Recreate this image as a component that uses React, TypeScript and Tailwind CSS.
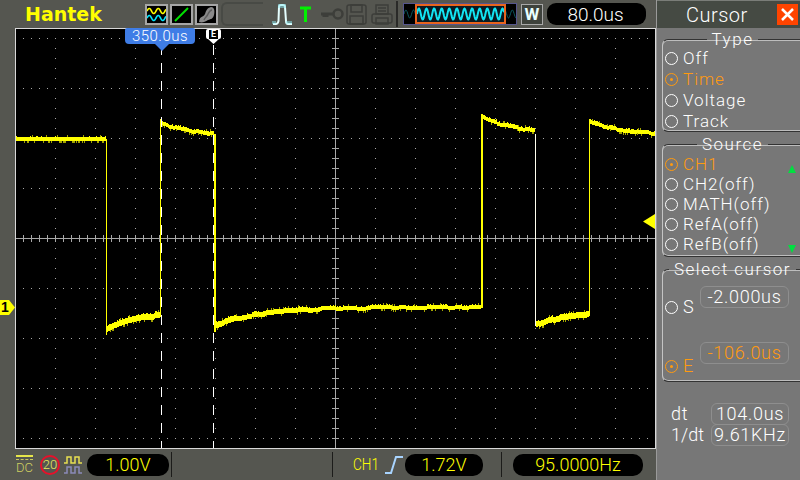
import React from "react";

const FONT = { fontFamily: 'Roboto, "Liberation Sans", Arial, sans-serif', fontWeight: 300 };

function rnd(i: number) {
  const s = Math.sin(i * 12.9898) * 43758.5453;
  return s - Math.floor(s);
}

type Seg = { x0: number; x1: number; y0: number; yi: number; tau: number; th0: number; th1: number };
const SEGS: Seg[] = [
  { x0: 16, x1: 106, y0: 139, yi: 139, tau: 40, th0: 4, th1: 4 },
  { x0: 107, x1: 160, y0: 329, yi: 312, tau: 30, th0: 6, th1: 6 },
  { x0: 161, x1: 214, y0: 123, yi: 137, tau: 40, th0: 4, th1: 4 },
  { x0: 215, x1: 481, y0: 325, yi: 307, tau: 42, th0: 6, th1: 4 },
  { x0: 482, x1: 535, y0: 117, yi: 135, tau: 40, th0: 4, th1: 4 },
  { x0: 536, x1: 589, y0: 324, yi: 312, tau: 32, th0: 6, th1: 6 },
  { x0: 590, x1: 655, y0: 122, yi: 136, tau: 42, th0: 4, th1: 4 },
];

function buildTrace() {
  let bright = "";
  let dim = "";
  SEGS.forEach((s, i) => {
    for (let x = s.x0; x < s.x1; x++) {
      const jog = i > 0 && rnd(Math.floor(x / 7) + 500) > 0.6 ? 1 : 0;
      const y = Math.round(s.yi + (s.y0 - s.yi) * Math.exp(-(x - s.x0) / s.tau)) + jog;
      const th = Math.round(s.th1 + (s.th0 - s.th1) * Math.exp(-(x - s.x0) / 70));
      const t = y - Math.floor(th / 2);
      const r = rnd(x);
      bright += `M${x} ${t}h1v${th}h-1z`;
      if (r > 0.82) bright += `M${x} ${t - 1}h1v1h-1z`;
      else if (r < 0.22) dim += `M${x} ${t + th}h1v2h-1z`;
      else if (r < 0.3) dim += `M${x} ${t - 2}h1v2h-1z`;
    }
  });
  return { bright, dim };
}

function Grid() {
  const rows = [38, 88, 138, 188, 288, 338, 388, 438];
  const cols: number[] = [];
  for (let x = 55; x < 655; x += 40) if (x !== 335) cols.push(x);
  let dots = "";
  rows.forEach((y) => {
    for (let x = 23; x < 655; x += 8) dots += `M${x} ${y}h1v1h-1z`;
  });
  cols.forEach((x) => {
    for (let y = 38; y < 448; y += 10) dots += `M${x} ${y}h1v1h-1z`;
  });
  let ticks = "";
  for (let x = 23; x < 655; x += 8) ticks += `M${x} 235h1v7h-1z`;
  for (let y = 38; y < 448; y += 10) ticks += `M332 ${y}h7v1h-7z`;
  const { bright, dim } = buildTrace();
  return (
    <svg
      className="absolute inset-0"
      width={639}
      height={419}
      viewBox="16 29 639 419"
      shapeRendering="crispEdges"
    >
      <path d={dots} fill="#a8a8a8" />
      <rect x={16} y={238} width={639} height={1} fill="#a8a8a8" />
      <rect x={335} y={29} width={1} height={419} fill="#a8a8a8" />
      <path d={ticks} fill="#a8a8a8" />
      <path d={dim} fill="#a3a300" />
      <path d={bright} fill="#ffff00" />
      <rect x={106} y={139} width={1} height={196} fill="#ffff00" />
      <rect x={160} y={119} width={1} height={198} fill="#ffff00" />
      <rect x={214} y={134} width={2} height={198} fill="#ffff00" />
      <rect x={481} y={114} width={2} height={194} fill="#ffff00" />
      <rect x={535} y={134} width={1} height={192} fill="#fffff0" />
      <rect x={589} y={119} width={1} height={197} fill="#ffff00" />
      <line x1={161.5} y1={45} x2={161.5} y2={448} stroke="#ffffff" strokeWidth={1} strokeDasharray="10 8" />
      <line x1={213.5} y1={45} x2={213.5} y2={448} stroke="#ffffff" strokeWidth={1} strokeDasharray="10 8" />
      <path d="M655 214v15l-12-7.5z" fill="#ffff00" shapeRendering="auto" />
    </svg>
  );
}

function Sine({ x0, x1, cy, amp, period, color, w }: { x0: number; x1: number; cy: number; amp: number; period: number; color: string; w: number }) {
  const pts: string[] = [];
  for (let x = x0; x <= x1; x += 0.5) {
    pts.push(`${x},${(cy - amp * Math.sin(((x - x0) / period) * Math.PI * 2)).toFixed(2)}`);
  }
  return <polyline points={pts.join(" ")} fill="none" stroke={color} strokeWidth={w} />;
}

function IconBox({ children, className }: { children: React.ReactNode; className?: string }) {
  return (
    <div className={`w-[23px] h-[21px] border-2 border-[#a6a6a6] bg-black shrink-0 ${className ?? ""}`}>
      <svg width={19} height={17} viewBox="0 0 19 17">
        {children}
      </svg>
    </div>
  );
}

function TopBar() {
  return (
    <div className="h-[28px] flex items-center bg-[#555650] pl-[25px]" style={FONT}>
      <span
        className="w-[76px] text-[19px] font-bold leading-none text-[#ffff00] shrink-0"
        style={{ fontFamily: '"DejaVu Sans", sans-serif' }}
      >
        Hantek
      </span>
      <IconBox className="ml-[44px]">
        <Sine x0={0} x1={19} cy={5} amp={2.6} period={9} color="#ffff00" w={1.6} />
        <Sine x0={0} x1={19} cy={12} amp={2.6} period={9} color="#00e5ff" w={1.6} />
      </IconBox>
      <IconBox className="ml-[2px]">
        <line x1={3} y1={15} x2={16} y2={2} stroke="#00e000" strokeWidth={2} />
      </IconBox>
      <IconBox className="ml-[2px]">
        <path d="M2 16C3 9 6 12 8 8c1-3 2-6 6-7 3 0 4 3 3 8-1 4-3 4-6 5-3 2-6 3-9 2z" fill="#8a8a8a" />
        <path d="M7 14c1-3 3-3 4-6 1-2 2-4 4-4" fill="none" stroke="#5e5e5e" strokeWidth={1.5} />
      </IconBox>
      <div className="ml-[3px] w-[42px] h-[24px] border-l-2 border-t-2 border-b-2 border-[#484a45] rounded-l-[6px] shrink-0" />
      <svg className="ml-[9px] shrink-0" width={21} height={22} viewBox="0 0 21 22" fill="none">
        <path d="M1 21h3c1 0 2-1 2.500-3L7 4c0-1 1-2 2-2h2c1 0 2 1 2 2l1 14c0 2 1 3 2 3h4" stroke="#e6ffff" strokeWidth={2} />
        <path d="M7 1v4M9 1v4M11 1v4M13 1v4M1 18v3M3 18v3M15 18v3M17 18v3M19 18v3" stroke="#8fe8ef" strokeWidth={1} />
      </svg>
      <svg className="ml-[6px] shrink-0" width={13} height={18} viewBox="0 0 13 18">
        <path d="M1 3h11M6.500 3v14" stroke="#00f000" strokeWidth={3} fill="none" />
      </svg>
      <svg className="ml-[8px] shrink-0" width={24} height={14} viewBox="0 0 24 14" fill="none">
        <circle cx={18} cy={7} r={4.500} stroke="#3d3e3a" strokeWidth={2.500} />
        <path d="M13 7H1M4 7v3M7 7v3" stroke="#3d3e3a" strokeWidth={3} />
      </svg>
      <svg className="ml-[2px] shrink-0" width={21} height={21} viewBox="0 0 21 21" fill="none" stroke="#3d3e3a" strokeWidth={1.500}>
        <rect x={1} y={1} width={19} height={19} rx={2} />
        <rect x={5} y={1} width={11} height={7} />
        <rect x={4} y={12} width={13} height={8} />
      </svg>
      <svg className="ml-[4px] shrink-0" width={22} height={21} viewBox="0 0 22 21" fill="none" stroke="#3d3e3a" strokeWidth={1.500}>
        <rect x={5} y={1} width={12} height={9} />
        <path d="M7 4h8M7 7h8" />
        <rect x={1} y={10} width={20} height={9} rx={2} />
        <rect x={5} y={14} width={12} height={6} />
      </svg>
      <div className="ml-[3px] w-[2px] h-[26px] bg-[#2a2a28] shrink-0" />
      <div className="ml-[5px] w-[114px] h-[22px] border border-[#55558c] bg-black shrink-0 relative">
        <svg className="absolute inset-0" width={112} height={20} viewBox="0 0 112 20">
          <Sine x0={0} x1={112} cy={10} amp={4} period={7.600} color="#0c5a60" w={1} />
        </svg>
        <div className="absolute left-[11px] top-0 w-[91px] h-[20px] border-2 border-[#e8641e] bg-[#0a1a22]">
          <svg width={87} height={16} viewBox="0 0 87 16">
            <Sine x0={0} x1={87} cy={8} amp={5.500} period={7.600} color="#12e4f2" w={2} />
          </svg>
        </div>
      </div>
      <div
        className="ml-[4px] w-[22px] h-[21px] border border-[#a8a8a8] bg-[#3e423c] flex items-center justify-center text-[17px] leading-none font-bold text-[#e8ffff] shrink-0"
      >
        W
      </div>
      <div className="ml-[4px] w-[99px] h-[22px] rounded-[9px] bg-black flex items-center justify-center text-[19px] leading-none text-white shrink-0 pr-[2px]">
        80.0us
      </div>
    </div>
  );
}

function BottomBar() {
  const Pill = ({ w, text, className }: { w: string; text: string; className: string }) => (
    <div className={`${w} ${className} h-[22px] rounded-[10px] bg-black flex items-center justify-center text-[18px] leading-none text-[#ffff00] shrink-0`}>
      {text}
    </div>
  );
  return (
    <div className="h-[31px] flex items-center bg-[#555650] pl-[16px]" style={FONT}>
      <div className="w-[17px] h-[21px] flex flex-col items-center shrink-0">
        <div className="w-[17px] h-[2px] bg-[#e6e64a] mt-[1px]" />
        <div className="w-[17px] h-0 border-t border-dashed border-[#c8c860] mt-[2px]" />
        <span className="text-[13px] leading-[13px] mt-[1px] text-[#cfcf60]">DC</span>
      </div>
      <div className="ml-[7px] w-[20px] h-[20px] rounded-full border-2 border-[#e8102a] flex items-center justify-center text-[13px] leading-none text-[#e8e860] shrink-0">
        20
      </div>
      <svg className="ml-[4px] shrink-0" width={18} height={20} viewBox="0 0 18 20" fill="none" strokeWidth={1.500}>
        <path d="M0 8h3V2h4v6h4V2h4v6h3" stroke="#e8e050" />
        <path d="M0 18h3v-6h4v6h4v-6h4v6h3" stroke="#8a8ab8" />
      </svg>
      <Pill w="w-[82px]" text="1.00V" className="ml-[5px]" />
      <div className="ml-[2px] w-px h-[25px] bg-[#1c1c1a] shrink-0" />
      <div className="ml-[160px] w-px h-[25px] bg-[#1c1c1a] shrink-0" />
      <span className="ml-[20px] w-[27px] text-[17px] leading-none text-[#ffff00] shrink-0 scale-x-[0.8] origin-left whitespace-nowrap">CH1</span>
      <svg className="ml-[5px] shrink-0" width={18} height={20} viewBox="0 0 18 20" fill="none">
        <path d="M0 18h6L11 2h7" stroke="#a8d4ff" strokeWidth={2} />
      </svg>
      <Pill w="w-[78px]" text="1.72V" className="ml-[2px]" />
      <div className="ml-[18px] w-px h-[25px] bg-[#1c1c1a] shrink-0" />
      <Pill w="w-[130px]" text="95.0000Hz" className="ml-[11px]" />
    </div>
  );
}

function Plot() {
  return (
    <div className="flex h-[421px] bg-[#555650]">
      <div className="w-[15px] relative shrink-0">
        <div
          className="absolute left-0 top-[272px] w-[15px] h-[15px] bg-[#ffff00] text-black text-[14px] font-bold leading-[15px] pl-[1px]"
          style={{ clipPath: "polygon(0 0, 60% 0, 100% 50%, 60% 100%, 0 100%)", fontFamily: '"Liberation Sans", sans-serif' }}
        >
          1
        </div>
      </div>
      <div className="relative w-[641px] border border-[#d8d8d8] bg-black shrink-0" style={FONT}>
        <Grid />
        <div className="absolute left-[109px] -top-px w-[70px] h-[16px] rounded-b-[4px] rounded-t-[2px] bg-[#3f7de6] text-white text-[15px] tracking-[0.5px] leading-[16px] text-center">
          350.0us
        </div>
        <svg className="absolute left-[139px] top-[15px]" width={14} height={7} viewBox="0 0 14 7">
          <path d="M0 0h14L7 7z" fill="#3f7de6" />
        </svg>
        <div className="absolute left-[190px] top-0 w-[15px] h-[10px] rounded-[2px] bg-white flex items-center justify-center">
          <div className="w-[9px] h-[9px] bg-black text-white text-[9px] font-bold leading-[9px] text-center">E</div>
        </div>
        <svg className="absolute left-[192px] top-[10px]" width={11} height={5} viewBox="0 0 11 5">
          <path d="M0 0h11L5.500 5z" fill="#ffffff" />
        </svg>
      </div>
    </div>
  );
}

function Radio({ on }: { on?: boolean }) {
  return (
    <span
      className={`w-[13px] h-[13px] rounded-full border flex items-center justify-center shrink-0 ${
        on ? "border-[#ff9a10]" : "border-white"
      }`}
    >
      {on && <span className="w-[3px] h-[3px] rounded-full bg-[#ff9a10]" />}
    </span>
  );
}

function Option({ label, on, h }: { label: string; on?: boolean; h: string }) {
  return (
    <div className={`${h} flex items-center ${on ? "text-[#ff9a10]" : "text-white"}`}>
      <Radio on={on} />
      <span className="ml-[5px] text-[17px] tracking-[1px] leading-none whitespace-nowrap">{label}</span>
    </div>
  );
}

function Group({ title, height, children }: { title: string; height: string; children: React.ReactNode }) {
  return (
    <fieldset
      className={`${height} border-l border-t border-b border-l-[#c4c4c4] border-t-[#333333] border-b-[#333333] rounded-l-[6px] shadow-[inset_0_1px_0_#bdbdbd,inset_0_-1px_0_#bdbdbd] pl-[2px]`}
    >
      <legend className="mx-auto px-[5px] h-[18px] text-white text-[17px] tracking-[1.5px] leading-[18px] whitespace-nowrap">
        {title}
      </legend>
      {children}
    </fieldset>
  );
}

function ValueBox({ text, orange, className }: { text: string; orange?: boolean; className?: string }) {
  return (
    <div
      className={`h-[22px] rounded-[6px] border border-[#8e8e8e] flex items-center justify-center text-[18px] tracking-[0.7px] leading-none shrink-0 ${
        orange ? "text-[#ff9a10]" : "text-white"
      } ${className ?? ""}`}
    >
      {text}
    </div>
  );
}

function Panel() {
  return (
    <div className="w-[144px] h-[480px] bg-[#777777] border-l border-[#9a9a9a] flex flex-col shrink-0" style={FONT}>
      <div className="h-[28px] bg-[#454a43] border-t border-[#7a7d78] flex items-center shrink-0">
        <span className="ml-[29px] w-[62px] text-[20px] tracking-[0.5px] leading-none text-white">Cursor</span>
        <div className="ml-[29px] w-[21px] h-[21px] bg-[#ff4400] flex items-center justify-center">
          <svg width={15} height={15} viewBox="0 0 15 15">
            <path d="M2 2l11 11M13 2L2 13" stroke="#ffffff" strokeWidth={2.500} />
          </svg>
        </div>
      </div>
      <div className="pl-[5px] pt-[2px] flex flex-col gap-[3px]">
        <Group title="Type" height="h-[102px]">
          <Option h="h-[21px]" label="Off" />
          <Option h="h-[21px]" label="Time" on />
          <Option h="h-[21px]" label="Voltage" />
          <Option h="h-[21px]" label="Track" />
        </Group>
        <Group title="Source" height="h-[122px]">
          <div className="relative pt-[1px]">
            <Option h="h-[20px]" label="CH1" on />
            <Option h="h-[20px]" label="CH2(off)" />
            <Option h="h-[20px]" label="MATH(off)" />
            <Option h="h-[20px]" label="RefA(off)" />
            <Option h="h-[20px]" label="RefB(off)" />
            <svg className="absolute left-[123px] top-[12px]" width={8} height={8} viewBox="0 0 8 8">
              <path d="M4 0L8 8H0z" fill="#00e040" />
            </svg>
            <svg className="absolute left-[123px] top-[92px]" width={8} height={8} viewBox="0 0 8 8">
              <path d="M0 0h8L4 8z" fill="#00e040" />
            </svg>
          </div>
        </Group>
        <Group title="Select cursor" height="h-[122px]">
          <div className="flex items-start pt-[8px]">
            <div className="mt-[12px] flex items-center text-white">
              <Radio />
              <span className="ml-[5px] w-[16px] text-[18px] leading-none">S</span>
            </div>
            <ValueBox text="-2.000us" className="w-[89px] ml-[1px]" />
          </div>
          <div className="flex items-start mt-[26px]">
            <div className="mt-[15px] flex items-center text-[#ff9a10]">
              <Radio on />
              <span className="ml-[5px] w-[16px] text-[18px] leading-none">E</span>
            </div>
            <ValueBox text="-106.0us" orange className="w-[89px] ml-[1px]" />
          </div>
        </Group>
      </div>
      <div className="pl-[14px] mt-[21px] flex flex-col">
        <div className="flex items-center">
          <span className="w-[40px] text-[18px] tracking-[0.8px] leading-none text-white">dt</span>
          <ValueBox text="104.0us" className="w-[78px]" />
        </div>
        <div className="flex items-center -mt-px">
          <span className="w-[40px] text-[18px] leading-none text-white whitespace-nowrap">1/dt</span>
          <ValueBox text="9.61KHz" className="w-[78px]" />
        </div>
      </div>
    </div>
  );
}

export default function App() {
  return (
    <div className="w-[800px] h-[480px] flex overflow-hidden bg-[#555650]">
      <div className="w-[656px] flex flex-col shrink-0">
        <TopBar />
        <Plot />
        <BottomBar />
      </div>
      <Panel />
    </div>
  );
}
